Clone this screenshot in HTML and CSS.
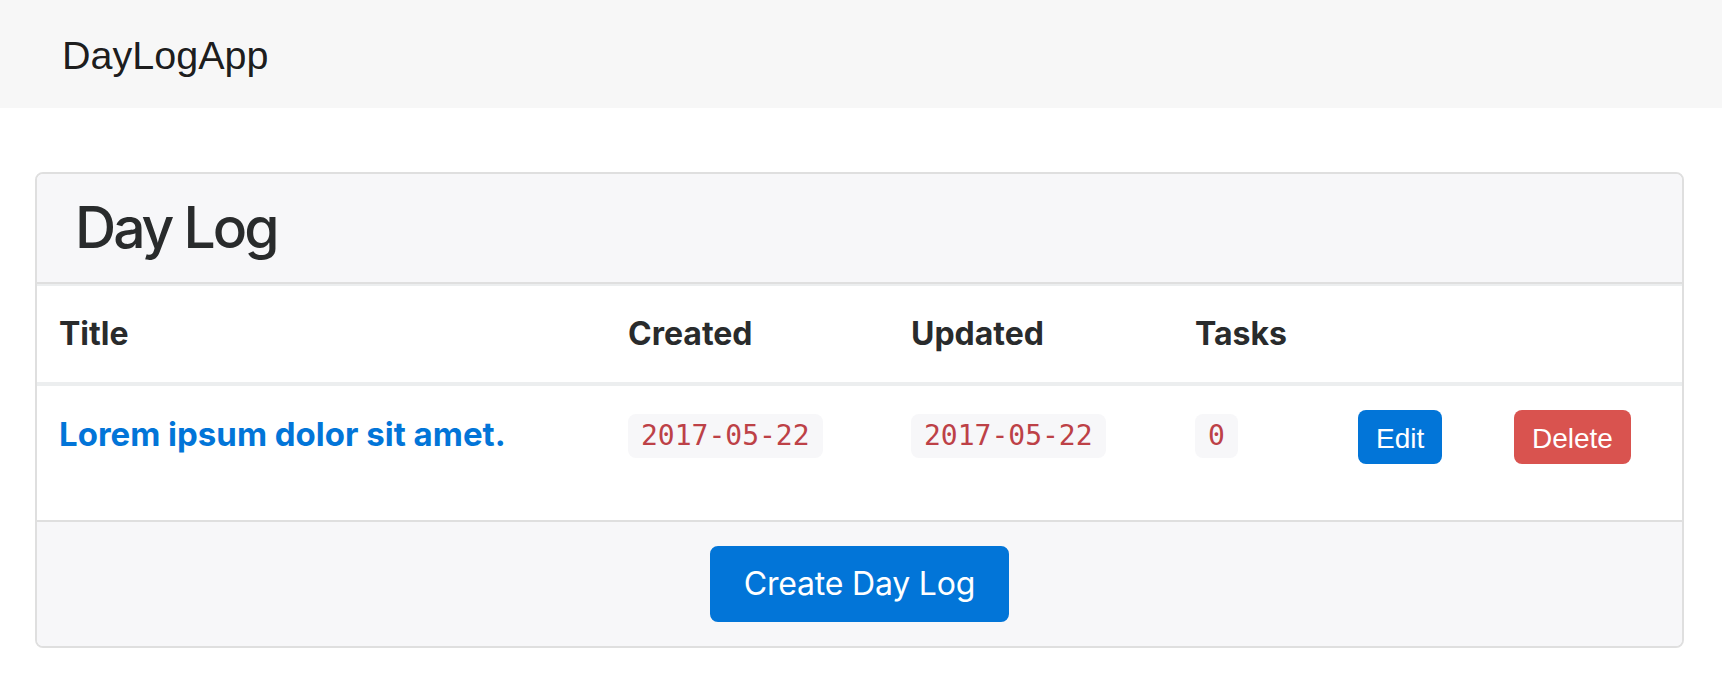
FILE: index.html
```html
<!DOCTYPE html>
<html lang="en">
<head>
<meta charset="utf-8">
<title>DayLogApp</title>
<link rel="stylesheet" href="styles.css">
</head>
<body>
  <nav class="navbar">
    <a class="brand" href="#">DayLogApp</a>
  </nav>
  <main class="card">
    <header class="card-header">
      <h1 class="card-title">Day Log</h1>
    </header>
    <table class="log-table">
      <colgroup>
        <col class="c-title">
        <col class="c-created">
        <col class="c-updated">
        <col class="c-tasks">
        <col class="c-edit">
        <col class="c-delete">
      </colgroup>
      <thead>
        <tr>
          <th>Title</th>
          <th>Created</th>
          <th>Updated</th>
          <th>Tasks</th>
          <th></th>
          <th></th>
        </tr>
      </thead>
      <tbody>
        <tr>
          <td><p class="log-title"><a href="#">Lorem ipsum dolor sit amet.</a></p></td>
          <td><code class="code">2017-05-22</code></td>
          <td><code class="code">2017-05-22</code></td>
          <td><code class="code">0</code></td>
          <td><a class="btn-sm btn-blue" href="#">Edit</a></td>
          <td><a class="btn-sm btn-red" href="#">Delete</a></td>
        </tr>
      </tbody>
    </table>
    <footer class="card-footer">
      <a class="btn-create" href="#">Create Day Log</a>
    </footer>
  </main>
</body>
</html>
```
FILE: styles.css
```css
* { box-sizing: border-box; }

body {
  margin: 0;
  background: #ffffff;
  font-family: Inter, "Noto Sans", sans-serif;
  color: #292b2c;
}

.navbar {
  height: 108px;
  background: #f7f7f7;
  padding: 33px 0 0 62px;
}

.brand {
  font-family: "Liberation Sans", Arial, sans-serif;
  font-size: 39.5px;
  line-height: 45px;
  color: rgba(0, 0, 0, 0.9);
  text-decoration: none;
}

.card {
  display: block;
  margin: 64px 38px 0 35px;
  border: 2px solid #dfdfdf;
  border-radius: 8px;
  overflow: hidden;
}

.card-header {
  background: #f7f7f9;
  padding: 24px 38px;
  border-bottom: 2px solid #dfdfdf;
}

.card-title {
  margin: 0;
  font-size: 57px;
  line-height: 60px;
  font-weight: 500;
  letter-spacing: -3px;
  color: #292b2c;
}

.log-table {
  width: 100%;
  table-layout: fixed;
  border-collapse: separate;
  border-spacing: 0;
}

.c-title { width: 567px; }
.c-created { width: 283px; }
.c-updated { width: 284px; }
.c-tasks { width: 163px; }
.c-edit { width: 156px; }
.c-delete { width: 192px; }

.log-table th {
  text-align: left;
  font-size: 32px;
  line-height: 48px;
  font-weight: 700;
  padding: 24px 24px;
  border-top: 2px solid #eceeef;
  border-bottom: 4px solid #eceeef;
  vertical-align: top;
}

.log-table td {
  padding: 24px 24px;
  vertical-align: top;
  font-size: 30px;
  line-height: 48px;
}

.log-table th:first-child,
.log-table td:first-child {
  padding-left: 22px;
}

.log-title {
  margin: 0 0 38px;
  font-size: 33px;
  line-height: 48px;
  font-weight: 700;
}

.log-title a {
  color: #0275d8;
  text-decoration: none;
}

.code {
  display: inline-block;
  margin-top: 4px;
  padding: 6px 13px;
  font-family: "DejaVu Sans Mono", "Liberation Mono", monospace;
  font-size: 28px;
  line-height: 32px;
  color: #bd4147;
  background: #f7f7f9;
  border-radius: 8px;
  vertical-align: top;
}

.btn-sm {
  display: inline-block;
  height: 54px;
  padding: 3px 18px 0;
  font-family: "Liberation Sans", Arial, sans-serif;
  font-size: 28px;
  line-height: 51px;
  color: #ffffff;
  text-decoration: none;
  border-radius: 8px;
  vertical-align: top;
}

.btn-blue { background: #0275d8; }
.btn-red { background: #d9534f; }

.card-footer {
  background: #f7f7f9;
  border-top: 2px solid #dfdfdf;
  padding: 24px;
  text-align: center;
}

.btn-create {
  display: inline-block;
  padding: 16px 32px;
  border: 2px solid #0275d8;
  background: #0275d8;
  color: #ffffff;
  font-size: 32px;
  line-height: 40px;
  letter-spacing: -0.2px;
  text-decoration: none;
  border-radius: 8px;
}
```
